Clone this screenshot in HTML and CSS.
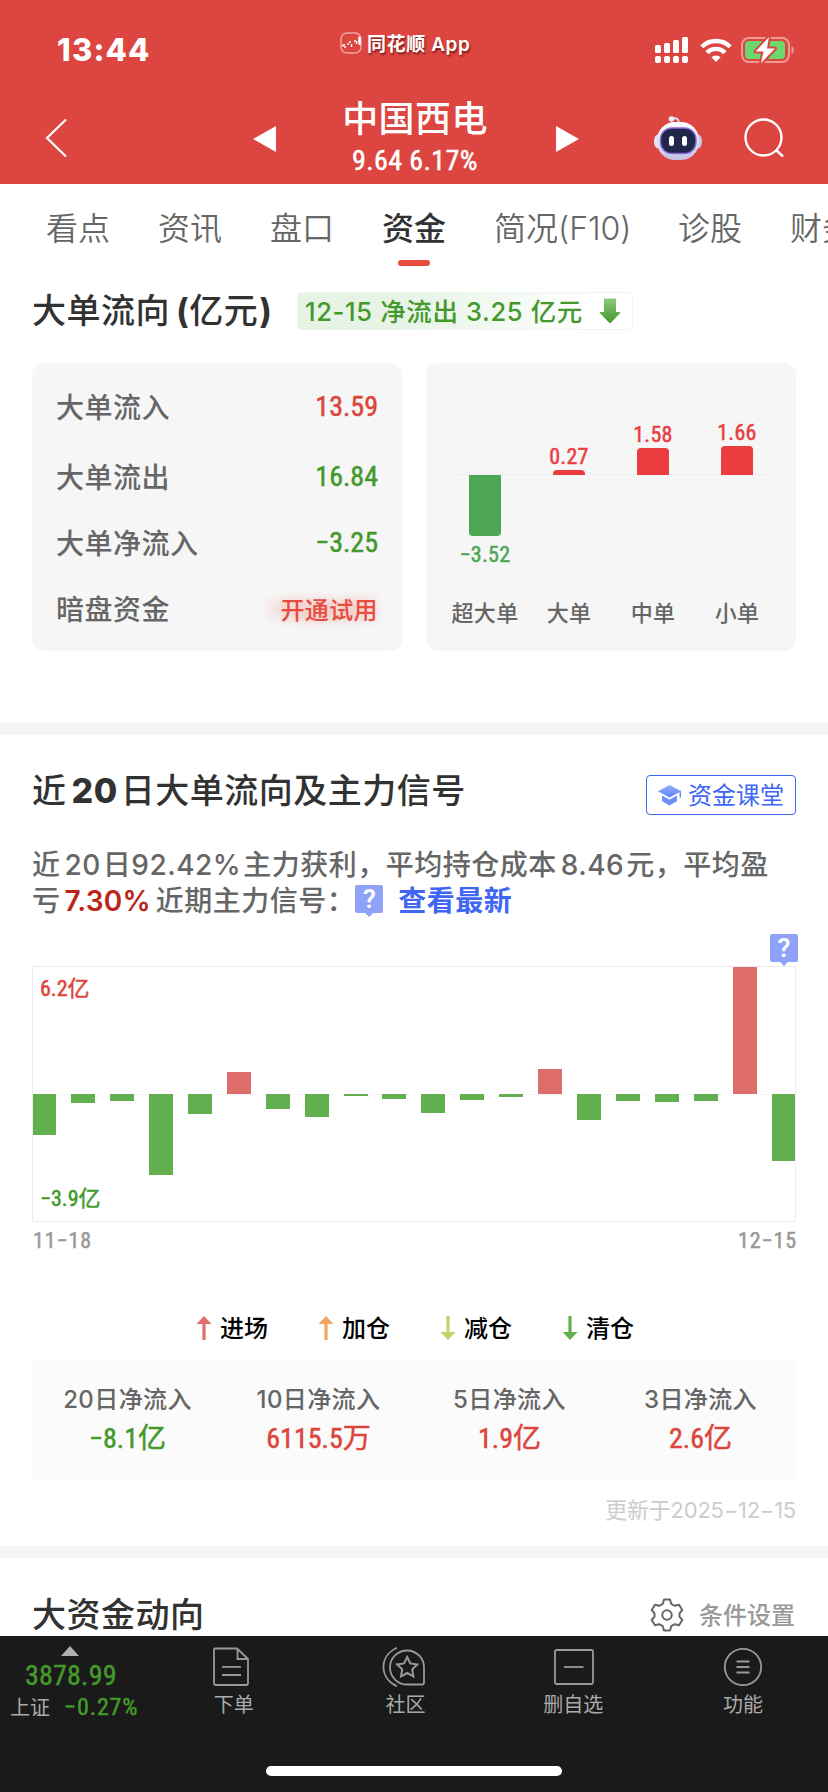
FILE: index.html
```html
<!DOCTYPE html>
<html lang="zh-CN">
<head>
    <meta charset="UTF-8">
    <meta name="viewport" content="width=device-width, initial-scale=1.0">
    <title>中国西电 - 资金</title>
    <link rel="stylesheet" href="styles.css">
</head>
<body>

    <header class="header">
        <div class="status">
            <span class="time">13:44</span>
            <div class="brand">
                <svg width="22" height="22" viewBox="0 0 22 22" fill="none" stroke="#fff">
                    <rect x="1" y="1" width="20" height="20" rx="6" stroke="#f0a5a2" stroke-width="1.4"/>
                    <path d="M2 14l3-1.5M5 14v2M8 11v2M9 10h2M11.5 12v3M14 9h2M16.500 9v3M19 4.500v8M20 5v8" stroke-width="1.5"/>
                </svg>
                <span>同花顺 App</span>
            </div>
            <div class="signals">
                <svg width="34" height="26" viewBox="0 0 34 26" fill="#fff">
                    <rect x="0" y="8" width="6" height="8" rx="1.500"/>
                    <rect x="9" y="6" width="6" height="10" rx="1.500"/>
                    <rect x="18" y="3" width="6" height="13" rx="1.500"/>
                    <rect x="27" y="0" width="6" height="16" rx="1.500"/>
                    <rect x="0" y="19" width="6" height="7" rx="2"/>
                    <rect x="9" y="19" width="6" height="7" rx="2"/>
                    <rect x="18" y="19" width="6" height="7" rx="2"/>
                    <rect x="27" y="19" width="6" height="7" rx="2"/>
                </svg>
                <svg class="wifi" width="32" height="24" viewBox="0 0 32 24" fill="none" stroke="#fff" stroke-width="4.400">
                    <path d="M1.800 8.800a20.200 20.200 0 0 1 28.400 0"/>
                    <path d="M7 14.600a12.800 12.800 0 0 1 18 0"/>
                    <path d="M16 24l-4.600-4.700a6.500 6.500 0 0 1 9.200 0z" fill="#fff" stroke="none"/>
                </svg>
                <svg width="54" height="28" viewBox="0 0 54 28">
                    <rect x="1" y="2" width="47" height="24" rx="7" fill="none" stroke="#ee9a97" stroke-width="2"/>
                    <path d="M50.500 10v8c3-1 3-7 0-8z" fill="#ee9a97"/>
                    <rect x="4" y="5" width="40" height="18" rx="4" fill="#6cd86b"/>
                    <path d="M28 1L14.500 15.500h8L20 27l14-14.500h-8z" fill="#fff" stroke="#dd4540" stroke-width="4" stroke-linejoin="round" paint-order="stroke"/>
                </svg>
            </div>
        </div>
        <nav class="nav">
            <svg class="back" width="22" height="40" viewBox="0 0 22 40" fill="none" stroke="#fff" stroke-width="2.200">
                <path d="M21 1.500L2 20l19 18.500"/>
            </svg>
            <svg class="prev" width="24" height="26" viewBox="0 0 24 26" fill="#fff"><path d="M0 13L23 0v26z"/></svg>
            <div class="stock">
                <h1>中国西电</h1>
                <p class="num">9.64 6.17%</p>
            </div>
            <svg class="next" width="24" height="26" viewBox="0 0 24 26" fill="#fff"><path d="M23 13L0 0v26z"/></svg>
            <svg class="robot" width="48" height="46" viewBox="0 0 48 46">
                <defs>
                    <linearGradient id="shell" x1="0" y1="0" x2="0" y2="1">
                        <stop offset="0" stop-color="#ffffff"/>
                        <stop offset="1" stop-color="#c3c1e6"/>
                    </linearGradient>
                </defs>
                <path d="M18 3.500c5-.8 7 .5 7 5" fill="none" stroke="#dcdcf0" stroke-width="2"/>
                <circle cx="17.500" cy="4" r="2.800" fill="#eeeef8"/>
                <ellipse cx="4" cy="26.500" rx="4" ry="7" fill="#e4e4f4"/>
                <ellipse cx="44" cy="26.500" rx="4" ry="7" fill="#c9c9e8"/>
                <rect x="3" y="7" width="42" height="38" rx="18" fill="url(#shell)"/>
                <rect x="6.500" y="13" width="35.500" height="25.500" rx="11.500" fill="#20274a" stroke="#8b6bdc" stroke-width="1.400"/>
                <rect x="15" y="21" width="5" height="10" rx="2.500" fill="#fff"/>
                <rect x="28" y="21" width="5" height="10" rx="2.500" fill="#fff"/>
            </svg>
            <svg class="search" width="40" height="40" viewBox="0 0 40 40" fill="none" stroke="#fff" stroke-width="2.400">
                <circle cx="19.500" cy="19.500" r="18"/>
                <path d="M32 32l7 6.500"/>
            </svg>
        </nav>
    </header>

    <div class="tabs">
        <span>看点</span>
        <span>资讯</span>
        <span>盘口</span>
        <span class="active">资金</span>
        <span class="f10">简况(F10)</span>
        <span>诊股</span>
        <span>财务</span>
    </div>

    <section class="flow">
        <div class="flow-head">
            <h2>大单流向<b>(</b>亿元<b class="close">)</b></h2>
            <div class="badge">
                <span>12-15 净流出 3.25 亿元</span>
                <svg width="22" height="26" viewBox="0 0 22 26">
                    <defs>
                        <linearGradient id="down" x1="0" y1="0" x2="0" y2="1">
                            <stop offset="0" stop-color="#8cc981"/>
                            <stop offset="1" stop-color="#43992a"/>
                        </linearGradient>
                    </defs>
                    <path d="M6 .5h10q1 0 1 1V14h3.500q1.500 0 .5 1.200l-9 9.300q-1 1-2 0l-9-9.300Q0 14 1.500 14H5V1.500q0-1 1-1z" fill="url(#down)"/>
                </svg>
            </div>
        </div>
        <div class="cards">
            <div class="card amounts">
                <div class="row first"><span>大单流入</span><span class="num red">13.59</span></div>
                <div class="row second"><span>大单流出</span><span class="num green">16.84</span></div>
                <div class="row third"><span>大单净流入</span><span class="num green">−3.25</span></div>
                <div class="row"><span>暗盘资金</span><span class="trial">开通试用</span></div>
            </div>
            <div class="card columns">
                <div class="column down">
                    <div class="up-area"></div>
                    <div class="down-area"><i style="height: 61px"></i><span class="num">−3.52</span></div>
                    <label>超大单</label>
                </div>
                <div class="column">
                    <div class="up-area"><span class="num">0.27</span><i style="height: 5px"></i></div>
                    <div class="down-area"></div>
                    <label>大单</label>
                </div>
                <div class="column">
                    <div class="up-area"><span class="num">1.58</span><i style="height: 27px"></i></div>
                    <div class="down-area"></div>
                    <label>中单</label>
                </div>
                <div class="column">
                    <div class="up-area"><span class="num">1.66</span><i style="height: 29px"></i></div>
                    <div class="down-area"></div>
                    <label>小单</label>
                </div>
            </div>
        </div>
    </section>

    <section class="history">
        <div class="history-head">
            <h2>近<b>20</b>日大单流向及主力信号</h2>
            <a class="lesson">
                <svg width="24" height="22" viewBox="0 0 24 22">
                    <defs>
                        <linearGradient id="cap" x1="0" y1="0" x2="0" y2="1">
                            <stop offset="0" stop-color="#9bb0fb"/>
                            <stop offset="1" stop-color="#5c80f7"/>
                        </linearGradient>
                    </defs>
                    <path d="M11.500 1L23 7v6.500h-1.500V8.300L11.500 13.500 0 7.300z" fill="url(#cap)"/>
                    <path d="M4 11.500l7.500 4 7.500-4V17q-3 2-7.500 4.500Q7 19 4 17z" fill="#6f8ff8"/>
                </svg>
                <span>资金课堂</span>
            </a>
        </div>
        <p class="summary">近<span class="gap"></span>20<span class="gap small"></span>日92.42%<span class="gap small"></span>主力获利，平均持仓成本<span class="gap"></span>8.46<span class="gap small"></span>元，平均盈<br>亏<span class="gap"></span><b class="profit">7.30%</b> 近期主力信号：<i class="mark">?</i><b class="latest">查看最新</b></p>

        <div class="chart">
            <i class="mark chart-mark">?</i>
            <span class="num max red">6.2亿</span>
            <span class="num min green">−3.9亿</span>
            <div class="bars" id="bars"></div>
        </div>
        <div class="dates num"><span>11−18</span><span>12−15</span></div>

        <div class="legend">
            <span><svg width="16" height="24" viewBox="0 0 16 24" fill="#df6f6a"><path d="M8 0l7.500 8H9.600v16H6.400V8H.5z"/></svg>进场</span>
            <span><svg width="16" height="24" viewBox="0 0 16 24" fill="#f2a65e"><path d="M8 0l7.500 8H9.600v16H6.400V8H.5z"/></svg>加仓</span>
            <span><svg width="16" height="24" viewBox="0 0 16 24" fill="#bfd567"><path d="M8 24l7.500-8H9.600V0H6.400v16H.5z"/></svg>减仓</span>
            <span><svg width="16" height="24" viewBox="0 0 16 24" fill="#62af50"><path d="M8 24l7.500-8H9.600V0H6.400v16H.5z"/></svg>清仓</span>
        </div>

        <div class="totals">
            <div><span>20日净流入</span><strong class="num green">−8.1亿</strong></div>
            <div><span>10日净流入</span><strong class="num red">6115.5万</strong></div>
            <div><span>5日净流入</span><strong class="num red">1.9亿</strong></div>
            <div><span>3日净流入</span><strong class="num red">2.6亿</strong></div>
        </div>
        <p class="updated">更新于2025−12−15</p>
    </section>

    <section class="trend">
        <h2>大资金动向</h2>
        <a class="settings">
            <svg width="34" height="34" viewBox="0 0 34 34" fill="none" stroke="#666" stroke-width="2" stroke-linejoin="round">
                <path d="M14 1.500h6l1.200 4.300 3.600 2L29 6.800l3.300 5.200-2.800 3.300v3.400l2.800 3.300-3.300 5.200-4.200-1-3.600 2L20 32.500h-6l-1.200-4.300-3.600-2-4.200 1L1.700 22l2.800-3.300v-3.400L1.700 12 5 6.800l4.200 1 3.600-2z"/>
                <circle cx="17" cy="17" r="4.700"/>
            </svg>
            <span>条件设置</span>
        </a>
    </section>

    <footer class="toolbar">
        <div class="tools">
            <div class="index">
                <svg width="18" height="10" viewBox="0 0 18 10" fill="#b0b0b0"><path d="M9 0l9 10H0z"/></svg>
                <strong class="num">3878.99</strong>
                <p><span>上证</span><span class="num">−0.27%</span></p>
            </div>
            <div class="tool order">
                <svg width="40" height="40" viewBox="0 0 40 40" fill="none" stroke="#999" stroke-width="1.800">
                    <path d="M4 1.500h22L37 12v24q0 2-2 2H5q-2 0-2-2V3q0-1.500 1-1.500zM26.500 1.500V12H37M11 19.800h19M11 28h19"/>
                </svg>
                <span>下单</span>
            </div>
            <div class="tool group">
                <svg width="44" height="40" viewBox="0 0 44 40" fill="none" stroke="#999" stroke-width="1.800">
                    <path d="M15 .8C-3 9-3 31 15 39.200M25 37.500a17 17 0 1 1 17-17v15q0 2-2 2z"/>
                    <path d="M25.200 10l3.100 6.400 7 1-5.100 4.900 1.200 7-6.200-3.300-6.200 3.300 1.200-7-5.100-4.900 7-1z" stroke-width="2"/>
                </svg>
                <span>社区</span>
            </div>
            <div class="tool remove">
                <svg width="40" height="40" viewBox="0 0 40 40" fill="none" stroke="#999" stroke-width="1.800">
                    <rect x="1" y="3" width="38" height="34" rx="1.500"/>
                    <path d="M10 20h19.500"/>
                </svg>
                <span>删自选</span>
            </div>
            <div class="tool">
                <svg width="40" height="40" viewBox="0 0 40 40" fill="none" stroke="#999" stroke-width="1.800">
                    <circle cx="20" cy="20" r="18.200"/>
                    <path d="M13.500 14.500h13M13.500 20h13M13.500 25.500h13"/>
                </svg>
                <span>功能</span>
            </div>
        </div>
        <div class="home"></div>
    </footer>

    <script src="script.js"></script>
</body>
</html>
```

FILE: styles.css
```css
* {
    margin: 0;
    padding: 0;
    box-sizing: border-box;
}

body {
    width: 828px;
    height: 1792px;
    overflow: hidden;
    display: flex;
    flex-direction: column;
    background: #fff;
    font-family: Inter, "Noto Sans CJK SC", sans-serif;
    color: #666;
}

svg {
    display: block;
    flex: none;
}

i {
    font-style: normal;
}

/* Narrow digits for prices and amounts */
.num {
    font-family: Roboto, "Noto Sans CJK SC", sans-serif;
    font-stretch: 85%;
    font-weight: 400;
    -webkit-text-stroke: 0.5px currentColor;
}

.red {
    color: #dc453c;
}

.green {
    color: #43992a;
}

h2 {
    color: #323232;
    font-size: 34px;
    font-weight: 500;
    letter-spacing: 0.5px;
    line-height: 40px;
    white-space: nowrap;
}

/* Header */
.header {
    height: 184px;
    flex: none;
    background: #dd4540;
    color: #fff;
}

.status {
    height: 76px;
    display: flex;
    padding: 0 33px 0 57px;
}

.time {
    width: 283px;
    font-size: 31px;
    font-weight: 800;
    letter-spacing: 1.2px;
    line-height: 38px;
    padding-top: 31px;
}

.brand {
    display: flex;
    align-items: center;
    gap: 5px;
    height: 22px;
    margin-top: 32px;
    font-size: 19px;
    font-weight: 600;
    letter-spacing: 0.6px;
    white-space: nowrap;
    text-shadow: 1px 2px 2px rgba(60, 0, 0, 0.6);
}

.brand span {
    padding-bottom: 2px;
}

.signals {
    display: flex;
    align-items: center;
    height: 28px;
    margin: 36px 0 0 auto;
}

.wifi {
    margin: 0 9px 0 11px;
}

.nav {
    height: 108px;
    display: flex;
    padding: 0 44px 0 45px;
}

.back {
    margin-top: 42px;
}

.prev {
    margin: 50px 0 0 186px;
}

.stock {
    width: 276px;
    text-align: center;
}

.stock h1 {
    font-size: 36px;
    font-weight: 500;
    letter-spacing: 0.4px;
    line-height: 50px;
    padding-top: 18px;
}

.stock p {
    font-size: 28px;
    letter-spacing: 0.4px;
    line-height: 30px;
    padding-top: 2px;
}

.next {
    margin: 50px 0 0 3px;
}

.robot {
    margin: 39px 0 0 74px;
}

.search {
    margin: 42px 0 0 42px;
}

/* Tabs */
.tabs {
    height: 90px;
    flex: none;
    display: flex;
    gap: 48px;
    padding-left: 46px;
    overflow: hidden;
    font-size: 32px;
    line-height: 90px;
    white-space: nowrap;
}

.tabs span {
    flex: none;
    width: 64px;
    font-weight: 350;
}

.tabs .f10 {
    width: 136px;
}

.tabs .active {
    position: relative;
    color: #323232;
    font-weight: 500;
}

.active::after {
    content: "";
    position: absolute;
    left: 16px;
    top: 76px;
    width: 32px;
    height: 6px;
    border-radius: 3px;
    background: #e74c3c;
}

/* Big orders */
.flow {
    height: 449px;
    flex: none;
    padding: 14px 32px 0;
}

.flow-head {
    display: flex;
    align-items: center;
    gap: 25px;
    height: 46px;
}

.flow-head h2 {
    width: 240px;
}

.flow-head b {
    margin-left: 6px;
    font-weight: 700;
}

.flow-head .close {
    margin-left: 1px;
}

.badge {
    width: 336px;
    height: 38px;
    display: flex;
    align-items: center;
    justify-content: space-between;
    padding: 0 11px 0 7px;
    border: 1px solid #edf7ec;
    border-radius: 4px;
    background: linear-gradient(90deg, #e6f3e5 30%, #fff 90%);
    color: #43992a;
    font-size: 25.5px;
    font-weight: 500;
    letter-spacing: 0.65px;
    white-space: nowrap;
}

.badge span {
    padding-bottom: 4px;
}

.cards {
    display: grid;
    grid-template-columns: 370px 370px;
    gap: 24px;
    margin-top: 29px;
}

.card {
    height: 288px;
    border-radius: 12px;
    background: #f6f6f6;
}

.amounts {
    padding: 8px 24px;
    font-size: 28px;
    font-weight: 500;
}

.row {
    height: 66px;
    display: flex;
    align-items: center;
    justify-content: space-between;
}

.row span:first-child {
    letter-spacing: 0.5px;
}

.row.first,
.row.second {
    height: 70px;
}

.row.third {
    margin-top: -2px;
}

.trial {
    font-size: 24px;
    letter-spacing: 0.4px;
    color: #e74c3c;
    text-shadow: 0 0 10px rgba(231, 76, 60, 0.3), -14px 0 9px rgba(231, 76, 60, 0.2);
}

.columns {
    display: grid;
    grid-template-columns: repeat(4, 84px);
    justify-content: center;
    background: linear-gradient(#efefef, #efefef) 23px 111px / 324px 1px no-repeat #f6f6f6;
}

.column {
    display: flex;
    flex-direction: column;
    align-items: center;
    color: #eb3d40;
}

.column.down {
    color: #4da753;
}

.up-area {
    height: 112px;
    display: flex;
    flex-direction: column;
    align-items: center;
    justify-content: flex-end;
}

.down-area {
    height: 120px;
    display: flex;
    flex-direction: column;
    align-items: center;
}

.column i {
    width: 32px;
    background: currentColor;
    border-radius: 4px 4px 0 0;
}

.column.down i {
    border-radius: 0 0 4px 4px;
}

.column .num {
    font-size: 22px;
    letter-spacing: 0.3px;
    line-height: 26px;
}

.column.down .num {
    margin-top: 6px;
}

.column label {
    color: #666;
    font-size: 22px;
    font-weight: 500;
    letter-spacing: 0.3px;
    line-height: 36px;
}

/* Last 20 days */
.history {
    height: 835px;
    flex: none;
    padding: 34px 32px 0;
    border-top: 12px solid #f4f4f4;
    border-bottom: 12px solid #f4f4f4;
}

.history-head {
    display: flex;
    justify-content: space-between;
    align-items: center;
    height: 44px;
}

.history-head b {
    margin: 0 3px 0 5px;
    font-weight: 800;
}

.lesson {
    width: 150px;
    height: 40px;
    margin-top: 8px;
    display: flex;
    align-items: center;
    justify-content: space-between;
    padding: 0 11px;
    border: 1px solid #4066f5;
    border-radius: 4px;
    color: #4066f5;
    font-size: 24px;
}

.lesson span {
    padding-bottom: 4px;
}

.summary {
    height: 72px;
    margin-top: 34px;
    font-size: 28px;
    font-weight: 500;
    letter-spacing: 0.5px;
    line-height: 36px;
    white-space: nowrap;
}

.gap {
    display: inline-block;
    width: 4px;
}

.gap.small {
    width: 2px;
}

.profit {
    margin-right: -3px;
    color: #b8261b;
    font-weight: 600;
    letter-spacing: 0.2px;
}

.latest {
    margin-left: 15px;
    color: #4066f5;
    font-weight: 600;
}

.mark {
    display: inline-block;
    position: relative;
    width: 28px;
    height: 28px;
    border-radius: 2px;
    background: #8ea2f9;
    color: #fff;
    font: 600 26px/28px Roboto, sans-serif;
    letter-spacing: 0;
    text-align: center;
    vertical-align: 3px;
}

.mark::after {
    content: "";
    position: absolute;
    left: 10px;
    bottom: -4px;
    border: 4px solid transparent;
    border-top-color: #8ea2f9;
    border-bottom: 0;
}

.chart {
    position: relative;
    height: 256px;
    margin-top: 47px;
    border: 1px solid #ececec;
    background: repeating-linear-gradient(90deg, #f4f4f4 0 42px, transparent 42px 78px) 25px 127px / 762px 1px no-repeat;
}

.chart-mark {
    position: absolute;
    right: -3px;
    top: -33px;
}

.max,
.min {
    position: absolute;
    left: 7px;
    font-size: 22px;
    line-height: 26px;
}

.max {
    top: 9px;
}

.min {
    bottom: 9px;
}

.bars {
    display: flex;
    justify-content: space-between;
    height: 254px;
    margin: 0 -1px;
    clip-path: inset(0 1px);
}

.bars i {
    width: 24px;
    height: var(--h);
    margin-top: 127px;
    background: #62af50;
}

.bars .up {
    margin-top: calc(127px - var(--h));
    background: #de6c68;
}

.dates {
    display: flex;
    justify-content: space-between;
    margin-right: -1px;
    padding-left: 1px;
    color: #999;
    font-size: 22px;
    letter-spacing: 0.9px;
    line-height: 38px;
    height: 36px;
}

.legend {
    display: flex;
    gap: 50px;
    margin: 50px 0 0 164px;
    height: 36px;
    color: #000;
    font-size: 24px;
    font-weight: 500;
}

.legend span {
    display: flex;
    align-items: center;
    gap: 8px;
    width: 72px;
    white-space: nowrap;
}

.legend svg {
    margin-top: 3px;
}

.totals {
    display: grid;
    grid-template-columns: repeat(4, 1fr);
    height: 118px;
    margin-top: 17px;
    padding-top: 19px;
    background: #fbfbfb;
    text-align: center;
    font-size: 24px;
    font-weight: 500;
    letter-spacing: 0.4px;
    line-height: 40px;
}

.totals span,
.totals strong {
    display: block;
}

.totals strong {
    font-size: 28px;
    letter-spacing: 0;
    line-height: 38px;
}

.updated {
    margin-top: 13px;
    text-align: right;
    color: #ccc;
    font-size: 22px;
    font-weight: 400;
    letter-spacing: -0.25px;
    line-height: 36px;
}

/* Trend */
.trend {
    height: 78px;
    flex: none;
    display: flex;
    justify-content: space-between;
    padding: 37px 33px 0 32px;
}

.settings {
    display: flex;
    align-items: center;
    gap: 15px;
    height: 40px;
    color: #999;
    font-size: 24px;
    font-weight: 500;
}

.settings span {
    padding-bottom: 4px;
}

/* Toolbar */
.toolbar {
    height: 156px;
    flex: none;
    background: #1a1a1a;
    color: #aaa;
}

.tools {
    display: flex;
    height: 130px;
}

.index {
    width: 149px;
    padding-top: 10px;
}

.index svg {
    margin-left: 61px;
}

.index strong {
    display: block;
    padding-left: 25px;
    color: #43992a;
    font-size: 28px;
    letter-spacing: 0.2px;
    line-height: 39px;
}

.index p {
    display: flex;
    gap: 14px;
    padding-left: 10px;
    font-size: 20px;
    line-height: 26px;
}

.index p .num {
    color: #43992a;
    font-size: 24px;
    letter-spacing: 0.9px;
    line-height: 24px;
}

.tool {
    width: 170px;
    display: flex;
    flex-direction: column;
    align-items: center;
    padding-top: 11px;
    font-size: 20px;
    line-height: 36px;
}

.order svg {
    margin-left: -6px;
}

.group span {
    margin-left: 4px;
}

.remove svg {
    margin-left: 2px;
}

.home {
    width: 296px;
    height: 10px;
    margin: 0 auto;
    border-radius: 5px;
    background: #fff;
}
```

FILE: script.js
```js
// Height in px of each day, positive = inflow
const days = [-41, -9, -7, -80.5, -20, 22, -14.5, -22.5, -2, -4.5, -18.5, -5.5, -2.5, 25, -26, -7, -8, -7, 127, -67];
const bars = document.getElementById('bars');

days.forEach(value => {
    const bar = document.createElement('i');
    bar.style.setProperty('--h', Math.abs(value) + 'px');
    if (value > 0) {
        bar.className = 'up';
    }
    bars.appendChild(bar);
});
```
